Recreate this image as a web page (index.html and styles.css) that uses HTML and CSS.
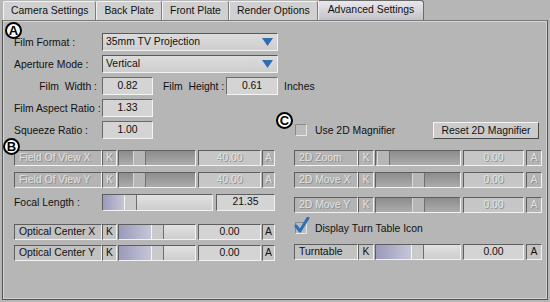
FILE: index.html
```html
<html>
<head>
<title>Advanced Settings</title>
<link rel="stylesheet" href="styles.css">
</head>
<body>
<div class="window">

  <div class="tabs">
    <div class="tab">Camera Settings</div>
    <div class="tab">Back Plate</div>
    <div class="tab">Front Plate</div>
    <div class="tab">Render Options</div>
    <div class="tab active">Advanced Settings</div>
  </div>

  <div class="panel">

    <div class="row first">
      <span class="lbl">Film Format :</span>
      <div class="select">35mm TV Projection<svg class="arrow" width="11" height="8" viewBox="0 0 11 8"><path d="M0 0H11L5.5 8Z" fill="#2f6db3"/></svg></div>
    </div>
    <div class="row">
      <span class="lbl">Aperture Mode :</span>
      <div class="select">Vertical<svg class="arrow" width="11" height="8" viewBox="0 0 11 8"><path d="M0 0H11L5.5 8Z" fill="#2f6db3"/></svg></div>
    </div>
    <div class="row">
      <span class="lbl right">Film&nbsp; Width :</span>
      <div class="field">0.82</div>
      <span class="lbl2">Film&nbsp; Height :</span>
      <div class="field">0.61</div>
      <span class="unit">Inches</span>
    </div>
    <div class="row">
      <span class="lbl">Film Aspect Ratio :</span>
      <div class="field">1.33</div>
    </div>
    <div class="row">
      <span class="lbl">Squeeze Ratio :</span>
      <div class="field">1.00</div>
      <div class="check magnifier"><span class="box"></span>Use 2D Magnifier</div>
      <div class="button">Reset 2D Magnifier</div>
    </div>

    <div class="cols">
      <div class="col left">
        <div class="ctl off">
          <div class="name">Field Of View X</div><div class="k">K</div>
          <div class="slider"><div class="fill" style="width:14px"></div><div class="thumb"></div></div>
          <div class="val">40.00</div><div class="a">A</div>
        </div>
        <div class="ctl off gap6">
          <div class="name">Field Of View Y</div><div class="k">K</div>
          <div class="slider"><div class="fill" style="width:14px"></div><div class="thumb"></div></div>
          <div class="val">40.00</div><div class="a">A</div>
        </div>
        <div class="focal gap6">
          <span class="lbl">Focal Length :</span>
          <div class="slider long"><div class="fill" style="width:21px"></div><div class="thumb"></div></div>
          <div class="val">21.35</div>
        </div>
        <div class="ctl gap13">
          <div class="name">Optical Center X</div><div class="k">K</div>
          <div class="slider"><div class="fill" style="width:32px"></div><div class="thumb"></div></div>
          <div class="val">0.00</div><div class="a">A</div>
        </div>
        <div class="ctl gap5">
          <div class="name">Optical Center Y</div><div class="k">K</div>
          <div class="slider"><div class="fill" style="width:32px"></div><div class="thumb"></div></div>
          <div class="val">0.00</div><div class="a">A</div>
        </div>
      </div>

      <div class="col right">
        <div class="ctl off">
          <div class="name">2D Zoom</div><div class="k">K</div>
          <div class="slider"><div class="fill" style="width:1px"></div><div class="thumb"></div></div>
          <div class="val">0.00</div><div class="a">A</div>
        </div>
        <div class="ctl off gap6">
          <div class="name">2D Move X</div><div class="k">K</div>
          <div class="slider"><div class="fill" style="width:36px"></div><div class="thumb"></div></div>
          <div class="val">0.00</div><div class="a">A</div>
        </div>
        <div class="ctl off gap9">
          <div class="name">2D Move Y</div><div class="k">K</div>
          <div class="slider"><div class="fill" style="width:36px"></div><div class="thumb"></div></div>
          <div class="val">0.00</div><div class="a">A</div>
        </div>
        <div class="check turntable">
          <span class="box"><svg class="tick" width="16" height="17" viewBox="0 0 16 17"><path d="M2 9L6 14L14 1" fill="none" stroke="#2a6fb8" stroke-width="3" stroke-linecap="round" stroke-linejoin="round"/></svg></span>Display Turn Table Icon
        </div>
        <div class="ctl gap8">
          <div class="name">Turntable</div><div class="k">K</div>
          <div class="slider"><div class="fill" style="width:35px"></div><div class="thumb"></div></div>
          <div class="val">0.00</div><div class="a">A</div>
        </div>
      </div>
    </div>

  </div>

  <span class="marker m-a">A</span>
  <span class="marker m-b">B</span>
  <span class="marker m-c">C</span>
</div>
</body>
</html>
```

FILE: styles.css
```css
body {
    margin: 0;
    background: #b6b6b6;
    font-family: 'Liberation Sans', Arial, sans-serif;
    font-size: 10.4px;
    color: #111;
}

.window {
    position: relative;
    width: 550px;
    height: 302px;
    white-space: nowrap;
}

/* tab strip */
.tabs {
    display: flex;
    height: 20px;
    padding-left: 3px;
    align-items: flex-end;
}

.tab {
    height: 19px;
    line-height: 18px;
    padding: 0 7px;
    box-sizing: border-box;
    background: #d0d0d0;
    border: 1px solid #f2f2f2;
    border-right-color: #7c7c7c;
    border-bottom: none;
    border-radius: 2px 3px 0 0;
}

.tab.active {
    height: 20px;
    padding: 0 9px;
    background: linear-gradient(#e8e8ee, #c2c2c6);
    border-color: #6a6a6a;
    border-left-color: #efefef;
}

/* main panel */
.panel {
    margin: 0 2px;
    height: 280px;
    box-sizing: border-box;
    border: 1px solid #555;
    border-top-color: #7a7a7a;
    box-shadow: inset 1px 1px 0 #d6d6d6, inset -1px -1px 0 #cfcfcf;
    padding: 12px 0 0 11px;
}

.row {
    display: flex;
    align-items: center;
    height: 18px;
    margin-top: 4px;
}

.row.first {
    margin-top: 0;
}

.lbl {
    width: 88px;
    flex: none;
}

.lbl.right {
    text-align: right;
    padding-right: 5px;
    box-sizing: border-box;
}

.lbl2 {
    margin-left: 10px;
    width: 63px;
}

.unit {
    margin-left: 6px;
}

.select {
    position: relative;
    width: 176px;
    height: 18px;
    box-sizing: border-box;
    line-height: 16px;
    padding-left: 3px;
    background: linear-gradient(#dcdcdc, #cecece);
    border: 1px solid;
    border-color: #5a5a5a #f2f2f2 #f2f2f2 #5a5a5a;
}

.arrow {
    position: absolute;
    right: 4px;
    top: 4px;
}

.field {
    width: 51px;
    height: 18px;
    box-sizing: border-box;
    line-height: 16px;
    text-align: center;
    background: #d4d4d4;
    border: 1px solid;
    border-color: #6a6a6a #f4f4f4 #f4f4f4 #6a6a6a;
}

.field + .lbl2 + .field {
    width: 52px;
}

/* checkboxes */
.check {
    display: flex;
    align-items: center;
    height: 16px;
}

.check .box {
    position: relative;
    width: 12px;
    height: 12px;
    box-sizing: border-box;
    margin-right: 8px;
    background: #bcbcbc;
    border: 1px solid;
    border-color: #8a8a8a #e6e6e6 #e6e6e6 #8a8a8a;
}

.tick {
    position: absolute;
    left: -2px;
    top: -6px;
}

.magnifier {
    margin-left: 142px;
}

.turntable {
    margin-top: 7px;
    margin-left: 1px;
}

.button {
    margin-left: auto;
    margin-right: 8px;
    width: 106px;
    height: 17px;
    box-sizing: border-box;
    line-height: 15px;
    text-align: center;
    background: #cbcbcb;
    border: 1px solid;
    border-color: #f4f4f4 #4a4a4a #4a4a4a #f4f4f4;
}

/* slider rows */
.cols {
    display: flex;
    margin-top: 11px;
}

.col {
    display: flex;
    flex-direction: column;
}

.col.left {
    width: 261px;
}

.col.right {
    width: 248px;
    margin-left: 19px;
}

.ctl, .focal {
    display: flex;
    height: 16px;
}

.gap5 { margin-top: 5px; }
.gap6 { margin-top: 6px; }
.gap8 { margin-top: 8px; }
.gap9 { margin-top: 9px; }
.gap13 { margin-top: 13px; }

.ctl > div, .focal > div {
    box-sizing: border-box;
    height: 16px;
    line-height: 14px;
    border: 1px solid;
    border-color: #5e5e5e #f2f2f2 #f2f2f2 #5e5e5e;
}

.name {
    padding-left: 4px;
    background: #c2c2c2;
    overflow: hidden;
}

.k, .a {
    text-align: center;
    background: #c4c4c4;
}

.slider {
    display: flex;
    background: linear-gradient(#e2e2e2, #cdcdcd);
}

.fill {
    height: 14px;
    background: linear-gradient(90deg, #9a9abb, #c6c6d8);
}

.thumb {
    width: 13px;
    height: 14px;
    box-sizing: border-box;
    background: #cacaca;
    border-left: 1px solid #f4f4f4;
    border-right: 1px solid #6e6e6e;
}

.val {
    text-align: center;
    background: #d4d4d4;
}

.left .name { width: 88px; }
.left .k { width: 15px; }
.left .slider { width: 78px; margin-left: 1px; }
.left .val { width: 63px; margin-left: 2px; }
.left .a { width: 13px; margin-left: 1px; }

.right .name { width: 64px; }
.right .k { width: 16px; }
.right .slider { width: 86px; margin-left: 1px; }
.right .val { width: 61px; margin-left: 2px; }
.right .a { width: 16px; margin-left: 2px; }

.focal {
    height: 17px;
    align-items: center;
}

.focal > div {
    height: 17px;
}

.focal .fill, .focal .thumb {
    height: 15px;
}

.left .slider.long { width: 111px; margin-left: 0; }
.left .focal .val { width: 59px; margin-left: 3px; }

/* disabled controls */
.ctl.off .name, .ctl.off .k, .ctl.off .a, .ctl.off .val {
    color: #e2e2e2;
    text-shadow: 1px 1px 0 #8e8e8e;
    background: #b4b4b4;
}

.ctl.off .val {
    background: #c6c6c6;
}

.ctl.off .slider {
    background: linear-gradient(#8c8c8c, #acacac);
}

.ctl.off .fill {
    background: none;
}

.ctl.off .thumb {
    background: #b6b6b6;
    border-left-color: #d8d8d8;
    border-right-color: #707070;
}

/* callout letters */
.marker {
    position: absolute;
    width: 17px;
    height: 17px;
    box-sizing: border-box;
    border: 2px solid #000;
    border-radius: 50%;
    background: #fff;
    font-weight: bold;
    font-size: 13px;
    line-height: 13px;
    text-align: center;
    color: #000;
}

.m-a { left: 5px; top: 22px; }
.m-b { left: 3px; top: 138px; }
.m-c { left: 276px; top: 112px; }
```
